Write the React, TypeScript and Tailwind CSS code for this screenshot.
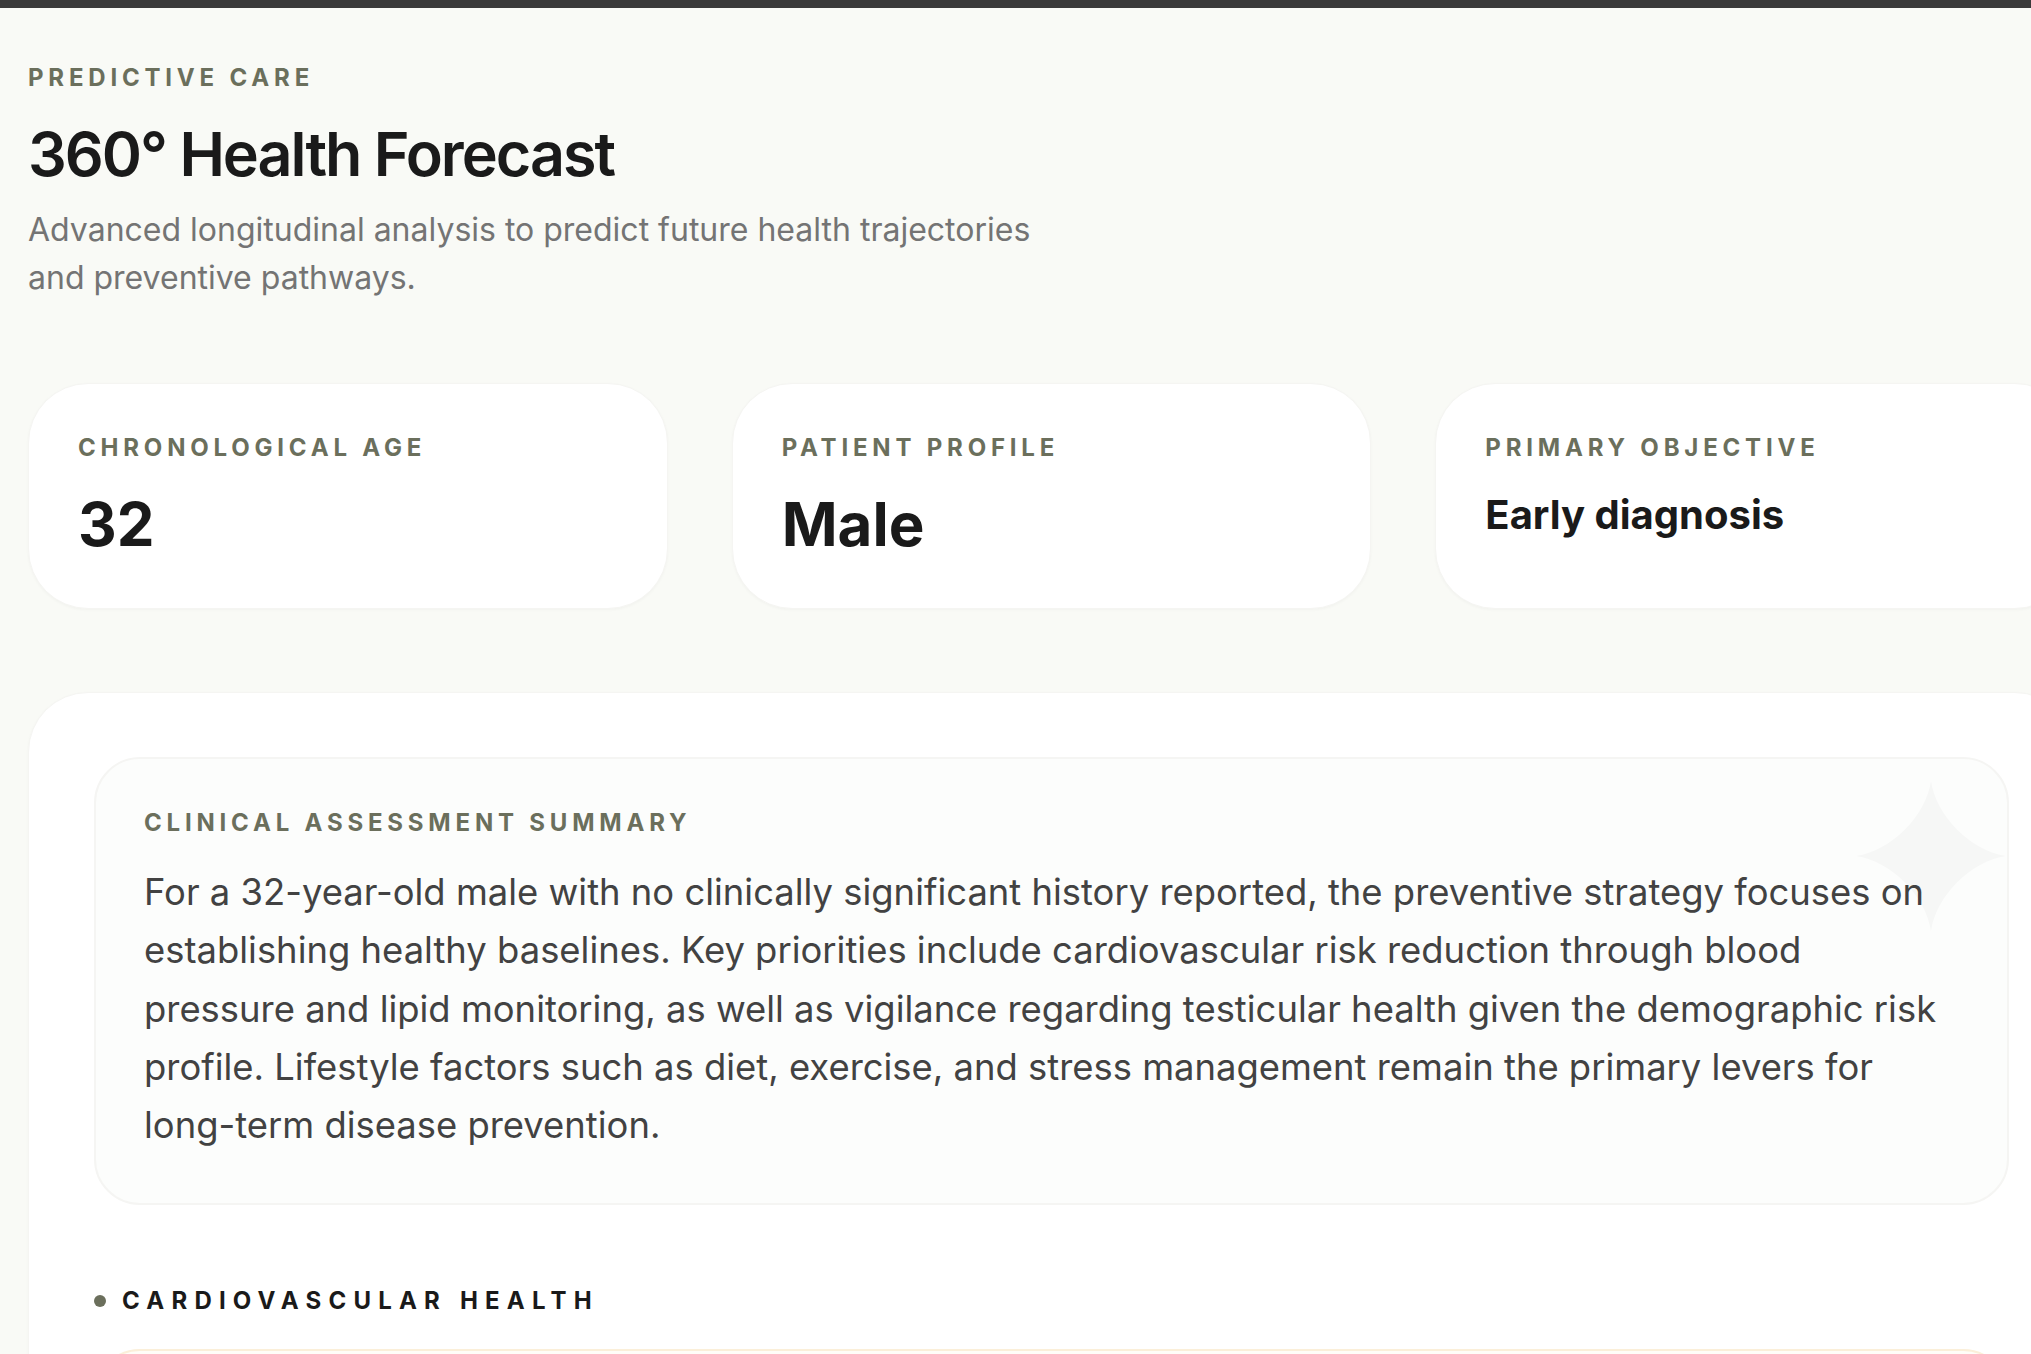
const font = "font-['Inter',sans-serif]";

function Label({ children }: { children: string }) {
  return (
    <div className="text-[24px] leading-[36px] font-bold tracking-[0.2em] text-[#6b6f5c]">
      {children}
    </div>
  );
}

function StatCard({ label, value, small }: { label: string; value: string; small?: boolean }) {
  return (
    <div className="h-[226px] rounded-[60px] bg-white border border-[#f5f5f2] pl-[49px] pr-[47px] pt-[46px] shadow-[0_1px_3px_rgba(0,0,0,0.03)]">
      <Label>{label}</Label>
      {small ? (
        <div className="mt-[21px] text-[40px] leading-[56px] font-bold text-[#1a1a1a]">{value}</div>
      ) : (
        <div className="mt-[20px] text-[60px] leading-[76px] font-bold text-[#1a1a1a]">{value}</div>
      )}
    </div>
  );
}

export default function App() {
  return (
    <div className={`${font} h-[1354px] w-full overflow-hidden bg-[#f9faf6]`}>
      <div className="h-2 bg-[#3a3a3a]" />
      <div className="w-[2047px] ml-[28px] pt-[52px]">
        <Label>PREDICTIVE CARE</Label>
        <h1 className="mt-[20px] text-[61px] leading-[76px] font-semibold tracking-[-2px] text-[#1a1a1a]">
          360° Health Forecast
        </h1>
        <p className="mt-[14px] w-[1040px] text-[32px] leading-[48px] text-[#747474]">
          Advanced longitudinal analysis to predict future health trajectories and preventive pathways.
        </p>

        <div className="mt-[81px] grid grid-cols-3 gap-[64px]">
          <StatCard label="CHRONOLOGICAL AGE" value="32" />
          <StatCard label="PATIENT PROFILE" value="Male" />
          <StatCard label="PRIMARY OBJECTIVE" value="Early diagnosis" small />
        </div>

        <div className="mt-[83px] rounded-[60px] bg-white border border-[#f5f5f2] px-[65px] pt-[64px] shadow-[0_1px_3px_rgba(0,0,0,0.03)]">
          <div className="relative h-[448px] rounded-[46px] bg-[#fcfdfc] border-2 border-[#f5f5f3] pl-[48px] pr-[60px] pt-[46px] overflow-hidden">
            <svg viewBox="0 0 150 150" className="absolute right-[1px] top-[22px] w-[150px] h-[150px]">
              <path
                d="M75 0 C80 35 115 70 150 75 C115 80 80 115 75 150 C70 115 35 80 0 75 C35 70 70 35 75 0 Z"
                fill="#f6f7f6"
              />
            </svg>
            <div className="relative">
              <Label>CLINICAL ASSESSMENT SUMMARY</Label>
              <p className="mt-[22px] text-[36.42px] leading-[58.3px] text-[#424242]">
                For a 32-year-old male with no clinically significant history reported, the preventive strategy focuses on
                establishing healthy baselines. Key priorities include cardiovascular risk reduction through blood
                pressure and lipid monitoring, as well as vigilance regarding testicular health given the demographic risk
                profile. Lifestyle factors such as diet, exercise, and stress management remain the primary levers for
                long-term disease prevention.
              </p>
            </div>
          </div>

          <div className="mt-[78px] flex items-center gap-4">
            <span className="w-3 h-3 rounded-full bg-[#6b6f5c]" />
            <span className="text-[24px] leading-[36px] font-bold tracking-[0.3em] text-[#1a1a1a]">CARDIOVASCULAR HEALTH</span>
          </div>

          <div className="mt-[30px] h-[200px] rounded-[46px] border-2 border-[#fbefd9] bg-[#fffdf8]" />
        </div>
      </div>
    </div>
  );
}
